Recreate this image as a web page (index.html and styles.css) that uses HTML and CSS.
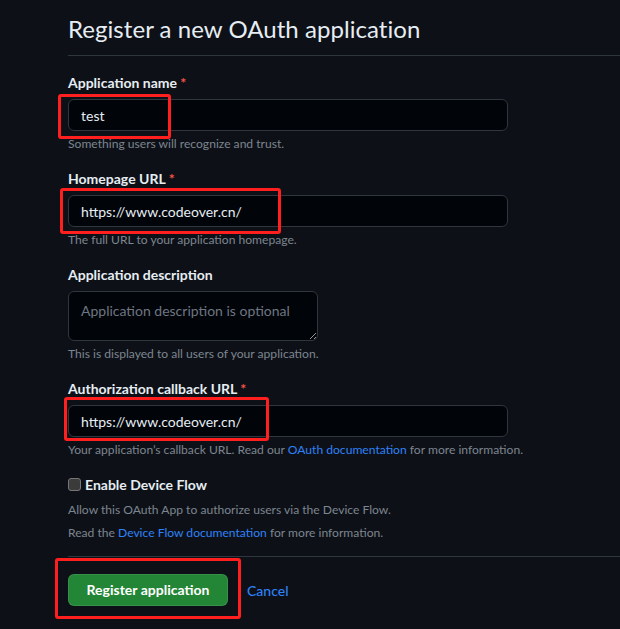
FILE: index.html
```html
<!DOCTYPE html>
<html lang="en">
<head>
<meta charset="utf-8">
<title>Register a new OAuth application</title>
<link rel="stylesheet" href="styles.css">
</head>
<body>
<div class="page">
  <div class="subhead">
    <h2 class="subhead-heading">Register a new OAuth application</h2>
  </div>
  <form class="app-form">
    <div class="form-group">
      <label class="form-label" for="app-name">Application name <span class="req">*</span></label>
      <input class="form-control" id="app-name" type="text" value="test">
      <p class="note">Something users will recognize and trust.</p>
    </div>
    <div class="form-group">
      <label class="form-label" for="home-url">Homepage URL <span class="req">*</span></label>
      <input class="form-control" id="home-url" type="text" value="https://www.codeover.cn/">
      <p class="note">The full URL to your application homepage.</p>
    </div>
    <div class="form-group">
      <label class="form-label" for="app-desc">Application description</label>
      <textarea class="form-control textarea" id="app-desc" placeholder="Application description is optional"></textarea>
      <p class="note">This is displayed to all users of your application.</p>
    </div>
    <div class="form-group">
      <label class="form-label" for="cb-url">Authorization callback URL <span class="req">*</span></label>
      <input class="form-control" id="cb-url" type="text" value="https://www.codeover.cn/">
      <p class="note">Your application’s callback URL. Read our <a class="link" href="#">OAuth documentation</a> for more information.</p>
    </div>
    <div class="check-group">
      <label class="check-label"><input class="checkbox" type="checkbox"> Enable Device Flow</label>
      <p class="note note-first">Allow this OAuth App to authorize users via the Device Flow.</p>
      <p class="note note-second">Read the <a class="link" href="#">Device Flow documentation</a> for more information.</p>
    </div>
    <hr class="divider">
    <div class="actions">
      <button class="btn-primary" type="button">Register application</button>
      <a class="cancel" href="#">Cancel</a>
    </div>
  </form>
  <div class="mark mark-name"></div>
  <div class="mark mark-home"></div>
  <div class="mark mark-callback"></div>
  <div class="mark mark-submit"></div>
</div>
</body>
</html>
```

FILE: styles.css
```css
html, body {
  margin: 0;
  padding: 0;
  background: #0d1117;
}

body {
  font-family: "Segoe UI", Lato, "Noto Sans", sans-serif;
  color: #e6edf3;
  font-size: 14px;
  line-height: 1.5;
  color-scheme: dark;
}

.page {
  position: relative;
  padding: 11px 0 0 68px;
  min-height: 618px;
}

.subhead {
  border-bottom: 1px solid #30363d;
  padding-bottom: 8px;
}

.subhead-heading {
  margin: 0;
  font-size: 24px;
  line-height: 36px;
  font-weight: 400;
  color: #e6edf3;
  letter-spacing: 0.05px;
}

.app-form {
  margin: 0;
  padding-top: 16px;
}

.form-group {
  display: flex;
  flex-direction: column;
  align-items: flex-start;
  margin-bottom: 15px;
}

.form-label {
  font-weight: 700;
  font-size: 14px;
  line-height: 21px;
  margin-bottom: 6px;
}

.req {
  color: #f85149;
}

.form-control {
  box-sizing: border-box;
  width: 440px;
  height: 32px;
  padding: 0 12px;
  margin: 0;
  background: #010409;
  border: 1px solid #30363d;
  border-radius: 6px;
  color: #e6edf3;
  font-family: inherit;
  font-size: 14px;
  line-height: 20px;
  outline: none;
}

.textarea {
  width: 250px;
  height: 50px;
  padding: 9px 12px 8px;
  resize: both;
}

.textarea::placeholder {
  color: #6e7681;
}

.note {
  margin: 4px 0 0;
  font-size: 12.1px;
  line-height: 18px;
  color: #7d8590;
}

.link {
  color: #2f81f7;
  text-decoration: none;
}

.check-group {
  display: flex;
  flex-direction: column;
  align-items: flex-start;
}

.check-label {
  display: flex;
  align-items: center;
  gap: 4px;
  font-weight: 700;
  font-size: 14px;
  line-height: 21px;
}

.checkbox {
  appearance: none;
  -webkit-appearance: none;
  width: 13px;
  height: 13px;
  margin: 0;
  box-sizing: border-box;
  background: #3b3b3b;
  border: 1px solid #767676;
  border-radius: 3px;
}

.note-first {
  margin-top: 6px;
}

.note-second {
  margin-top: 5px;
}

.divider {
  margin: 14px 0 0;
  border: 0;
  border-top: 1px solid #30363d;
  height: 0;
}

.actions {
  display: flex;
  align-items: center;
  gap: 19px;
  padding-top: 17px;
}

.btn-primary {
  box-sizing: border-box;
  width: 160px;
  height: 32px;
  padding: 0;
  background: #238636;
  border: 1px solid rgba(240, 246, 252, 0.1);
  border-radius: 6px;
  color: #ffffff;
  font-family: inherit;
  font-size: 14px;
  font-weight: 700;
  line-height: 20px;
}

.cancel {
  color: #2f81f7;
  text-decoration: none;
  font-size: 14px;
  font-weight: 500;
}

.mark {
  position: absolute;
  box-sizing: border-box;
  border: 3px solid #ff1f1f;
  border-radius: 3px;
  pointer-events: none;
}

.mark-name {
  left: 58px;
  top: 94px;
  width: 113px;
  height: 45px;
}

.mark-home {
  left: 60px;
  top: 188px;
  width: 221px;
  height: 46px;
}

.mark-callback {
  left: 64px;
  top: 397px;
  width: 205px;
  height: 44px;
}

.mark-submit {
  left: 55px;
  top: 558px;
  width: 186px;
  height: 61px;
}
```
